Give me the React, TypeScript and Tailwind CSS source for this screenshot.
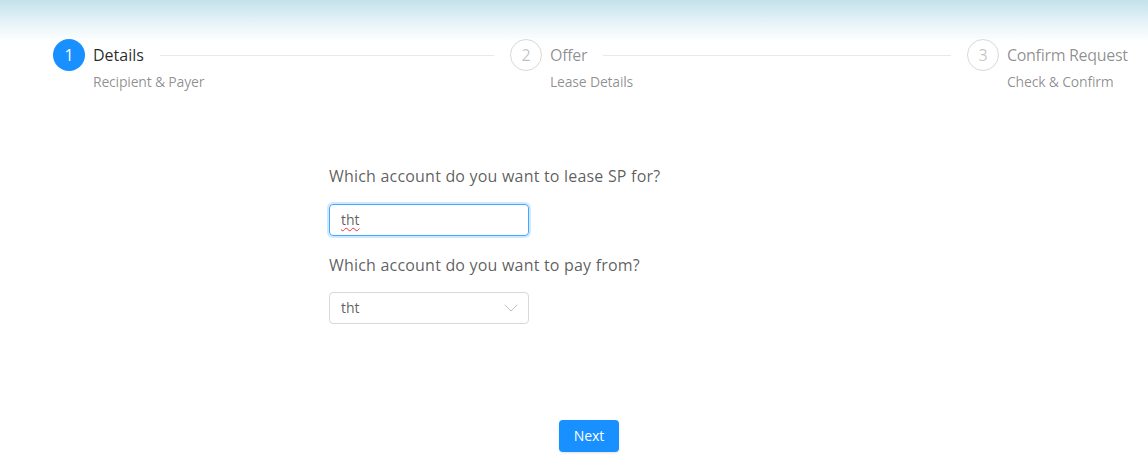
import React from 'react';
import { ChevronDown } from 'lucide-react';

type Step = { n: number; title: string; desc: string; active?: boolean; last?: boolean };

const steps: Step[] = [
    { n: 1, title: 'Details', desc: 'Recipient & Payer', active: true },
    { n: 2, title: 'Offer', desc: 'Lease Details' },
    { n: 3, title: 'Confirm Request', desc: 'Check & Confirm', last: true },
];

function StepItem({ step }: { step: Step }) {
    return (
        <div className={step.last ? 'flex flex-none' : 'flex w-[457px] pr-4 overflow-hidden'}>
            <div
                className={
                    step.active
                        ? 'w-8 h-8 rounded-full bg-[#1890ff] text-white flex items-center justify-center text-base flex-none'
                        : 'w-8 h-8 rounded-full border border-[#d9d9d9] text-[rgba(0,0,0,0.25)] flex items-center justify-center text-base flex-none'
                }
            >
                {step.n}
            </div>
            <div className="ml-2 flex-1 min-w-0">
                <div className="flex items-center h-8">
                    <span className={step.active ? 'text-base font-medium text-[rgba(0,0,0,0.85)] pr-4 whitespace-nowrap' : 'text-base text-[rgba(0,0,0,0.45)] pr-4 whitespace-nowrap tracking-[-0.3px]'}>
                        {step.title}
                    </span>
                    {!step.last && <div className="flex-1 h-px bg-[#e8e8e8]" />}
                </div>
                <div className="text-sm leading-[22px] text-[rgba(0,0,0,0.45)] whitespace-nowrap tracking-[-0.2px]">{step.desc}</div>
            </div>
        </div>
    );
}

export default function App() {
    return (
        <div className="w-[1148px] h-[455px] bg-white overflow-hidden" style={{ fontFamily: '"Open Sans", "Noto Sans", sans-serif' }}>
            <div className="bg-gradient-to-b from-[#c4e1ec] via-[#eaf5f9] via-60% to-white h-[42px]" />

            {/* steps */}
            <div className="flex pl-[53px] -mt-[3px]">
                {steps.map((s) => (
                    <StepItem key={s.n} step={s} />
                ))}
            </div>

            {/* form */}
            <div className="pl-[329px] pt-[71px]">
                <div className="text-base leading-6 text-[rgba(0,0,0,0.65)] tracking-[0.2px]">Which account do you want to lease SP for?</div>
                <div className="mt-4 w-[200px] h-8 rounded border border-[#40a9ff] shadow-[0_0_0_2px_rgba(24,144,255,0.2)] flex items-center px-[11px] text-sm text-[rgba(0,0,0,0.65)]">
                    <span className="underline decoration-wavy decoration-red-500 decoration-1 underline-offset-2">tht</span>
                </div>
                <div className="mt-[17px] text-base leading-6 text-[rgba(0,0,0,0.65)] tracking-[0.2px]">Which account do you want to pay from?</div>
                <div className="mt-[15px] w-[200px] h-8 rounded border border-[#d9d9d9] flex items-center justify-between pl-[11px] pr-[5px] text-sm text-[rgba(0,0,0,0.65)]">
                    <span>tht</span>
                    <ChevronDown className="w-6 h-6 text-[rgba(0,0,0,0.25)]" strokeWidth={1} />
                </div>
            </div>

            <div className="pl-[559px] pt-[96px]">
                <button className="w-[60px] h-8 rounded bg-[#1890ff] text-white text-sm shadow-sm">Next</button>
            </div>
        </div>
    );
}
